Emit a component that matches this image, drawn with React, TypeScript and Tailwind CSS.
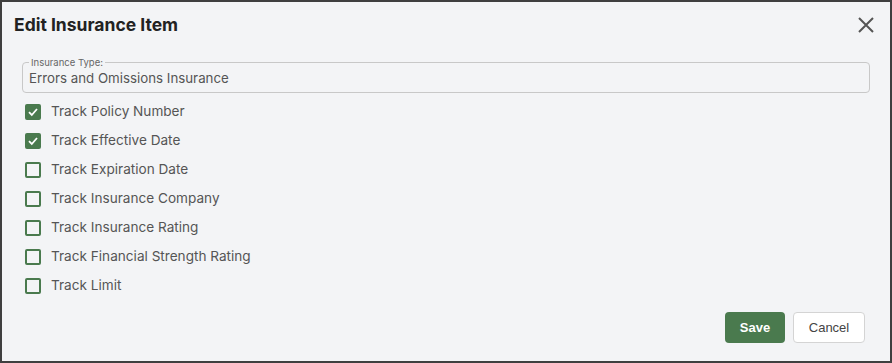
import { useState } from 'react';

const ITEMS = [
    { label: 'Track Policy Number', checked: true },
    { label: 'Track Effective Date', checked: true },
    { label: 'Track Expiration Date', checked: false },
    { label: 'Track Insurance Company', checked: false },
    { label: 'Track Insurance Rating', checked: false },
    { label: 'Track Financial Strength Rating', checked: false },
    { label: 'Track Limit', checked: false },
];

export default function App() {
    const [checks, setChecks] = useState(ITEMS.map((i) => i.checked));

    const toggle = (idx: number) => {
        setChecks((prev) => prev.map((c, i) => (i === idx ? !c : c)));
    };

    return (
        <div className="w-[892px] h-[363px] bg-[#f3f4f6] border-2 border-[#3f3f3f] font-['Inter',sans-serif] flex flex-col overflow-hidden">
            <div className="flex items-center justify-between pl-3 pr-[15px] h-[46px]">
                <h2 className="text-[17.5px] font-bold text-[#222] mt-[1px]">Edit Insurance Item</h2>
                <button className="text-[#555]">
                    <svg width="18" height="18" viewBox="0 0 18 18" fill="none" stroke="currentColor" strokeWidth="2">
                        <path d="M2 2L16 16M16 2L2 16" />
                    </svg>
                </button>
            </div>

            <div className="px-5 mt-[14px]">
                <div className="relative border border-[#c8c8c8] rounded-[4px] h-[31px] px-[6px] flex items-center">
                    <span className="absolute left-[6px] -top-[6px] text-[9.5px] leading-[11px] text-[#666] px-[2px] bg-[#f3f4f6]">
                        Insurance Type:
                    </span>
                    <div className="text-[13.3px] leading-[18px] text-[#555]">Errors and Omissions Insurance</div>
                </div>
            </div>

            <div className="flex flex-col pl-[23px] mt-[4px]">
                {ITEMS.map((item, idx) => (
                    <label key={item.label} className="flex items-center h-[29px] gap-[10px] cursor-pointer">
                        <span
                            onClick={() => toggle(idx)}
                            className={`w-[16px] h-[16px] rounded-[2px] border-2 border-[#4a7a4e] flex items-center justify-center ${checks[idx] ? 'bg-[#4a7a4e]' : 'bg-transparent'}`}
                        >
                            {checks[idx] && (
                                <svg width="12" height="12" viewBox="0 0 12 12" fill="none" stroke="white" strokeWidth="1.8">
                                    <path d="M2 6.2L4.8 9L10 3" />
                                </svg>
                            )}
                        </span>
                        <span className="text-[13.6px] text-[#555]">{item.label}</span>
                    </label>
                ))}
            </div>

            <div className="flex justify-end gap-2 pr-[25px] mt-auto mb-[18px]">
                <button className="w-[60px] h-[31px] rounded-[4px] bg-[#4a7a4e] text-white text-[13px] font-bold font-['Liberation_Sans',sans-serif]">
                    Save
                </button>
                <button className="w-[72px] h-[31px] rounded-[4px] bg-white border border-[#d4d4d4] text-[#444] text-[13px] font-['Liberation_Sans',sans-serif]">
                    Cancel
                </button>
            </div>
        </div>
    );
}
